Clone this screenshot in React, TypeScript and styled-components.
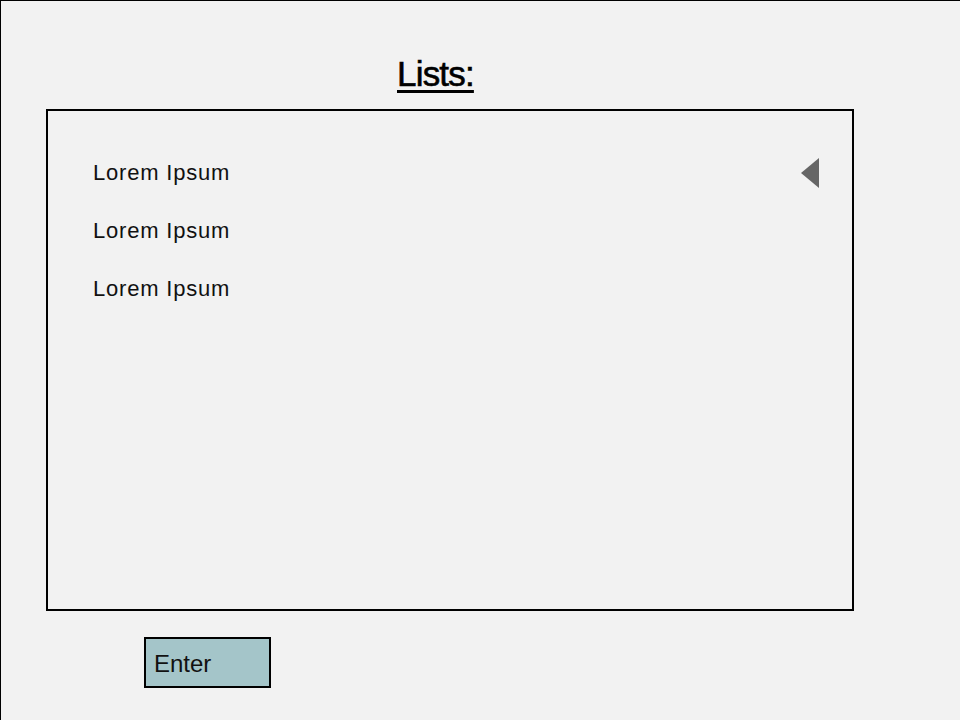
import React from "react";
import styled, { createGlobalStyle } from "styled-components";

const GlobalStyle = createGlobalStyle`
  html, body {
    margin: 0;
    padding: 0;
    background: #f2f2f2;
  }
  * {
    box-sizing: border-box;
  }
`;

const Page = styled.div`
  width: 961px;
  height: 720px;
  overflow: hidden;
  background: #f2f2f2;
  border-top: 1px solid #000;
  border-left: 1px solid #000;
  padding: 53px 0 0 45px;
  display: flex;
  flex-direction: column;
  font-family: "Liberation Sans", Arial, sans-serif;
  color: #111;
`;

const Title = styled.h1`
  margin: 0 0 15px 351px;
  font-size: 35px;
  line-height: 40px;
  font-weight: normal;
  letter-spacing: -0.8px;
  -webkit-text-stroke: 0.6px #000;
  text-decoration: underline;
  text-decoration-thickness: 3px;
  text-underline-offset: 4px;
  color: #000;
`;

const Panel = styled.div`
  width: 808px;
  height: 502px;
  border: 2px solid #000;
  padding: 33px 33px 0 45px;
  display: flex;
  flex-direction: column;
`;

const Row = styled.div`
  display: flex;
  align-items: center;
  justify-content: space-between;
  height: 58px;
  font-size: 22px;
  line-height: 58px;
  letter-spacing: 0.8px;
`;

const Collapse = styled.span`
  width: 0;
  height: 0;
  border-top: 15.5px solid transparent;
  border-bottom: 15.5px solid transparent;
  border-right: 18px solid #666;
  margin-top: -1px;
`;

const EnterButton = styled.button`
  margin: 26px 0 0 98px;
  width: 127px;
  height: 51px;
  border: 2px solid #000;
  background: #a4c5c9;
  padding: 2px 0 0 8px;
  text-align: left;
  font-family: "Liberation Sans", Arial, sans-serif;
  font-size: 24px;
  color: #111;
  cursor: pointer;
`;

const items = ["Lorem Ipsum", "Lorem Ipsum", "Lorem Ipsum"];

export default function App() {
  return (
    <>
      <GlobalStyle />
      <Page>
        <Title>Lists:</Title>
        <Panel>
          {items.map((text, i) => (
            <Row key={i}>
              <span>{text}</span>
              {i === 0 && <Collapse />}
            </Row>
          ))}
        </Panel>
        <EnterButton>Enter</EnterButton>
      </Page>
    </>
  );
}
